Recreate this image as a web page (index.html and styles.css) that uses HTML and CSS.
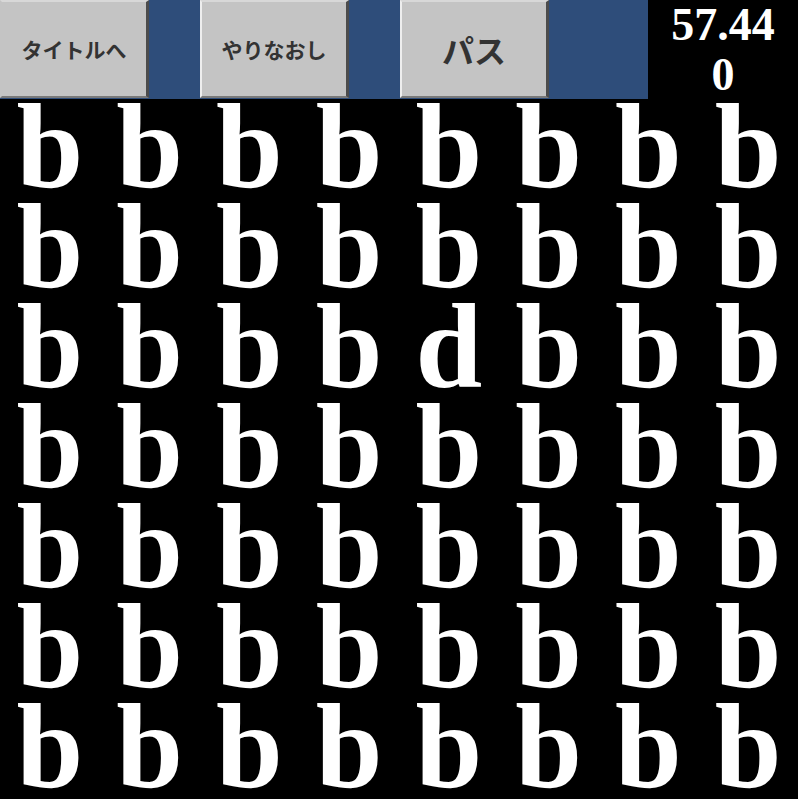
FILE: index.html
```html
<!DOCTYPE html>
<html lang="ja">
<head>
  <meta charset="UTF-8" />
  <title>bとdさがし</title>
  <link rel="stylesheet" href="styles.css">
</head>
<body>
  <div class="top-bar">
    <div class="menu">
      <button class="btn">タイトルへ</button>
      <button class="btn">やりなおし</button>
      <button class="btn btn-pass">パス</button>
    </div>
    <div class="timer" id="timer">57.440</div>
  </div>
  <div class="board" id="board"></div>
  <script>
    const board = document.getElementById("board");
    const answer = 20;
    for (let i = 0; i < 56; i++) {
      const cell = document.createElement("div");
      cell.className = "cell";
      cell.textContent = i === answer ? "d" : "b";
      board.appendChild(cell);
    }
  </script>
</body>
</html>
```

FILE: styles.css
```css
* { margin: 0; padding: 0; box-sizing: border-box; }
html, body {
  background: #000;
  width: 798px;
  height: 799px;
  overflow: hidden;
}
.top-bar {
  display: flex;
  height: 99px;
}
.menu {
  width: 648px;
  background: #2e4d7a;
  display: flex;
  gap: 51px;
}
.btn {
  width: 149px;
  height: 98px;
  background: #c4c4c4;
  border-top: 2px solid #d8d8d8;
  border-left: 2px solid #eeeeee;
  border-right: 3px solid #4c4c4c;
  border-bottom: 2px solid #7a7a7a;
  color: #333;
  font-family: "Noto Sans CJK JP", sans-serif;
  font-weight: 700;
  font-size: 21px;
  cursor: pointer;
}
.btn:first-child { border-left-color: #c4c4c4; }
.btn-pass { font-size: 32px; }
.timer {
  width: 150px;
  padding: 0 14px;
  color: #fff;
  font-family: "Liberation Serif", serif;
  font-weight: 700;
  font-size: 46px;
  line-height: 50px;
  text-align: center;
  word-break: break-all;
}
.board {
  display: grid;
  grid-template-columns: repeat(8, 1fr);
  grid-auto-rows: 100px;
}
.cell {
  color: #fff;
  font-family: "Liberation Serif", serif;
  font-weight: 700;
  font-size: 120px;
  line-height: 96px;
  text-align: center;
  cursor: pointer;
}
```
